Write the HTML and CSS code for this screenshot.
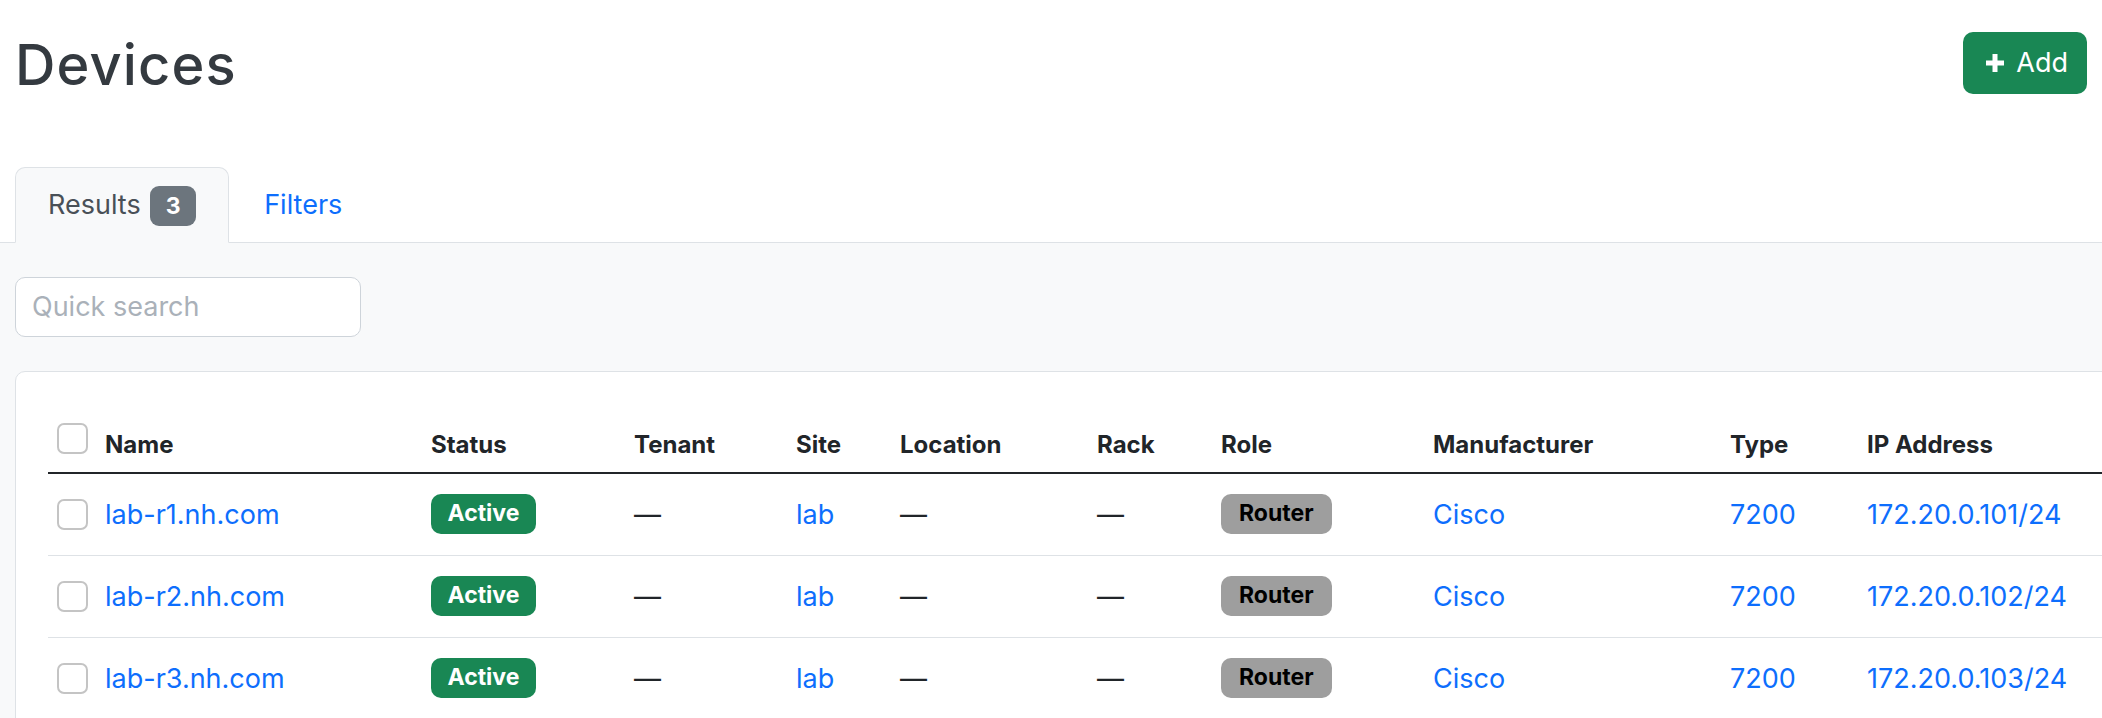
FILE: index.html
```html
<!DOCTYPE html>
<html lang="en">
<head>
<meta charset="utf-8">
<title>Devices</title>
<link rel="stylesheet" href="styles.css">
</head>
<body>
<div class="page-header">
  <h1 class="page-title">Devices</h1>
  <a class="btn-add" href="#">
    <svg class="plus" width="18" height="18" viewBox="0 0 18 18" aria-hidden="true"><path d="M6.5 0h5v6.5H18v5h-6.5V18h-5v-6.5H0v-5h6.5z" fill="#fff"/></svg>
    <span>Add</span>
  </a>
</div>

<ul class="tabs">
  <li class="tab active">Results <span class="count">3</span></li>
  <li class="tab"><a href="#">Filters</a></li>
</ul>

<div class="tab-content">
  <input class="quick-search" type="text" placeholder="Quick search">
  <div class="card">
    <table class="devices">
      <colgroup>
        <col class="c-cb"><col class="c-name"><col class="c-status"><col class="c-tenant"><col class="c-site"><col class="c-loc"><col class="c-rack"><col class="c-role"><col class="c-mfr"><col class="c-type"><col class="c-ip">
      </colgroup>
      <thead>
        <tr>
          <th><input class="cb" type="checkbox"></th>
          <th>Name</th>
          <th>Status</th>
          <th>Tenant</th>
          <th>Site</th>
          <th>Location</th>
          <th>Rack</th>
          <th>Role</th>
          <th>Manufacturer</th>
          <th>Type</th>
          <th>IP Address</th>
        </tr>
      </thead>
      <tbody>
        <tr>
          <td><input class="cb" type="checkbox"></td>
          <td><a href="#">lab-r1.nh.com</a></td>
          <td><span class="badge active">Active</span></td>
          <td>—</td>
          <td><a href="#">lab</a></td>
          <td>—</td>
          <td>—</td>
          <td><span class="badge role">Router</span></td>
          <td><a href="#">Cisco</a></td>
          <td><a href="#">7200</a></td>
          <td><a href="#">172.20.0.101/24</a></td>
        </tr>
        <tr>
          <td><input class="cb" type="checkbox"></td>
          <td><a href="#">lab-r2.nh.com</a></td>
          <td><span class="badge active">Active</span></td>
          <td>—</td>
          <td><a href="#">lab</a></td>
          <td>—</td>
          <td>—</td>
          <td><span class="badge role">Router</span></td>
          <td><a href="#">Cisco</a></td>
          <td><a href="#">7200</a></td>
          <td><a href="#">172.20.0.102/24</a></td>
        </tr>
        <tr>
          <td><input class="cb" type="checkbox"></td>
          <td><a href="#">lab-r3.nh.com</a></td>
          <td><span class="badge active">Active</span></td>
          <td>—</td>
          <td><a href="#">lab</a></td>
          <td>—</td>
          <td>—</td>
          <td><span class="badge role">Router</span></td>
          <td><a href="#">Cisco</a></td>
          <td><a href="#">7200</a></td>
          <td><a href="#">172.20.0.103/24</a></td>
        </tr>
      </tbody>
    </table>
  </div>
</div>
</body>
</html>
```

FILE: styles.css
```css
* { box-sizing: border-box; }

html, body {
  margin: 0;
  padding: 0;
  overflow: hidden;
  background: #fff;
}

body {
  font-family: Inter, "Noto Sans", "Liberation Sans", sans-serif;
  font-size: 27px;
  line-height: 1.5;
  color: #212529;
}

a { color: #0d6efd; text-decoration: none; }

.page-header {
  display: flex;
  justify-content: space-between;
  align-items: flex-start;
  padding: 32px 15px 0;
}

.page-title {
  margin: 0;
  font-size: 56px;
  line-height: 66px;
  font-weight: 500;
  color: #343a40;
  letter-spacing: 0.02em;
}

.btn-add {
  display: inline-flex;
  align-items: center;
  gap: 12px;
  height: 62px;
  padding: 0 19px 0 23px;
  background: #198754;
  color: #fff;
  border-radius: 10px;
  font-size: 27px;
}

.plus { display: block; }

.tabs {
  list-style: none;
  margin: 69px 0 0;
  padding: 0 15px;
  display: flex;
  border-bottom: 1px solid #dee2e6;
}

.tab {
  padding: 16.5px 32px 15.5px;
  margin-bottom: -1px;
  border: 1px solid transparent;
  border-radius: 10px 10px 0 0;
  line-height: 40.5px;
  color: #495057;
}

.tab a { padding: 0 2px; }

.tab.active {
  background: #f8f9fa;
  border-color: #dee2e6 #dee2e6 #f8f9fa;
}

.count {
  display: inline-block;
  margin-left: 2px;
  padding: 8.5px 15.5px;
  font-size: 23px;
  line-height: 1;
  font-weight: 700;
  color: #fff;
  background: #6c757d;
  border-radius: 9px;
}

.tab-content {
  background: #f8f9fa;
  padding: 34px 15px 0;
  min-height: 480px;
}

.quick-search {
  display: block;
  width: 346px;
  height: 60px;
  padding: 0 16px;
  border: 1px solid #ced4da;
  border-radius: 10px;
  background: #fff;
  font-family: inherit;
  font-size: 27px;
  color: #212529;
}

.quick-search::placeholder { color: #aab1b9; }

.card {
  margin-top: 34px;
  width: max-content;
  min-width: 100%;
  background: #fff;
  border: 1px solid #dee2e6;
  border-radius: 10px;
  padding: 32px 32px 0;
  min-height: 400px;
}

.devices {
  border-collapse: separate;
  border-spacing: 0;
  table-layout: fixed;
  width: 2110px;
}

.c-cb { width: 48px; }
.c-name { width: 326px; }
.c-status { width: 203px; }
.c-tenant { width: 162px; }
.c-site { width: 104px; }
.c-loc { width: 197px; }
.c-rack { width: 124px; }
.c-role { width: 212px; }
.c-mfr { width: 297px; }
.c-type { width: 137px; }
.c-ip { width: 300px; }

.devices th {
  text-align: left;
  font-size: 24px;
  line-height: 36px;
  font-weight: 700;
  padding: 19px 9px 9px;
  vertical-align: bottom;
  border-bottom: 2px solid #212529;
  white-space: nowrap;
}

.devices td {
  padding: 20px 9px;
  line-height: 41px;
  vertical-align: middle;
  border-bottom: 1px solid #dee2e6;
  white-space: nowrap;
}

.cb {
  -webkit-appearance: none;
  appearance: none;
  width: 31px;
  height: 31px;
  margin: 0;
  border: 2px solid #c4c4c4;
  border-radius: 7px;
  background: #fff;
}

.devices th .cb { vertical-align: baseline; margin-bottom: -1px; }
.devices td .cb { display: block; }

.badge {
  display: inline-block;
  vertical-align: top;
  font-size: 23px;
  line-height: 1;
  font-weight: 700;
  padding: 8.5px 16.5px;
  border-radius: 10px;
}

.badge.active { background: #198754; color: #fff; }
.badge.role { background: #9e9e9e; color: #000; padding: 8.5px 18px; }
```
